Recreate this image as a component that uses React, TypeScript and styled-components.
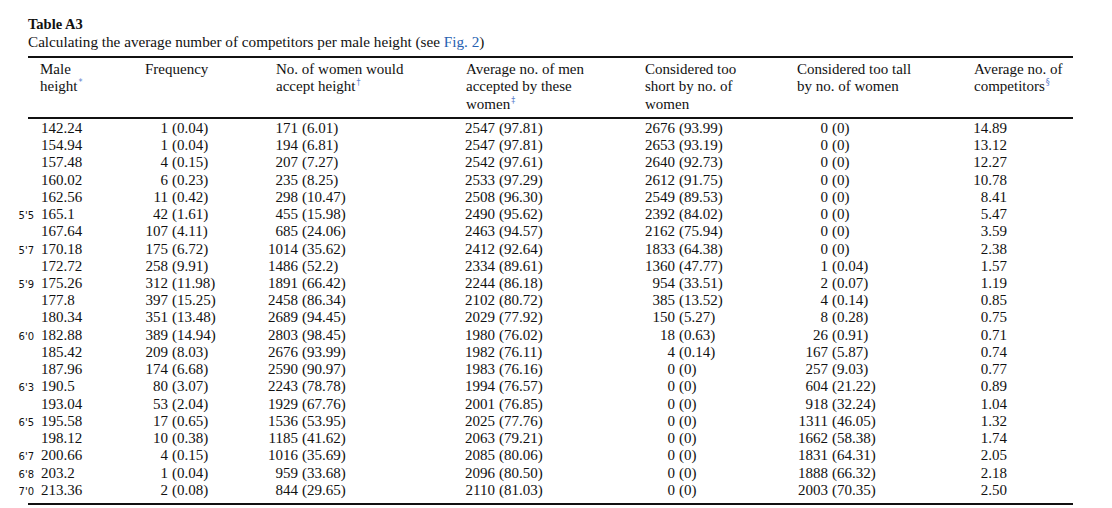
import React from "react";
import styled, { createGlobalStyle } from "styled-components";

const Global = createGlobalStyle`
  html, body { margin: 0; padding: 0; background: #ffffff; }
  body { font-family: "Liberation Serif", "Times New Roman", serif; color: #111; }
`;

const Page = styled.div`
  padding: 16px 0 0 28px;
  width: 1045px;
`;

const Title = styled.div`
  font-size: 14.5px;
  font-weight: 700;
  line-height: 17px;
`;

const Caption = styled.div`
  font-size: 15.2px;
  line-height: 18px;
  margin-bottom: 5px;
`;

const Link = styled.span`
  color: #2660b0;
`;

const Table = styled.table`
  width: 1045px;
  table-layout: fixed;
  border-collapse: collapse;
  border-top: 2px solid #111;
  border-bottom: 2px solid #111;
  font-size: 15px;
`;

const Th = styled.th`
  text-align: left;
  font-weight: 400;
  vertical-align: top;
  white-space: nowrap;
  line-height: 17.3px;
  padding: 3px 0 4px 12px;
  border-bottom: 2px solid #111;
`;

const Sup = styled.sup`
  font-family: "DejaVu Sans", sans-serif;
  font-size: 8px;
  color: #5a80cc;
  vertical-align: 6px;
  line-height: 0;
  margin-left: 1px;
`;

const Tr = styled.tr<{ $first?: boolean; $last?: boolean }>`
  td {
    padding-top: ${(p) => (p.$first ? "1px" : "0")};
    padding-bottom: ${(p) => (p.$last ? "4px" : "0")};
  }
`;

const Td = styled.td`
  padding: 0;
  vertical-align: top;
`;

const Line = styled.div<{ $w: number; $pad?: number }>`
  display: grid;
  grid-template-columns: ${(p) => p.$w}px auto;
  column-gap: 4px;
  justify-content: start;
  align-items: baseline;
  height: 17.24px;
  line-height: 17.24px;
  padding-left: ${(p) => p.$pad ?? 0}px;
  white-space: nowrap;
  overflow: visible;
`;

const Num = styled.span`
  text-align: right;
`;

const HeightLine = styled.div`
  display: flex;
  align-items: baseline;
  height: 17.24px;
  line-height: 17.24px;
  padding-left: 13px;
  white-space: nowrap;
`;

const Feet = styled.span`
  width: 24px;
  margin-left: -31px;
  margin-right: 7px;
  text-align: right;
  font-family: "DejaVu Sans", "Liberation Sans", sans-serif;
  font-size: 10px;
  color: #111;
`;

type Pair = [string, string];
type Row = {
  ft?: string;
  h: string;
  f: Pair;
  acc: Pair;
  avg: Pair;
  short: Pair;
  tall: Pair;
  comp: string;
};

const raw: string[] = [
  "|142.24|1|0.04|171|6.01|2547|97.81|2676|93.99|0|0|14.89",
  "|154.94|1|0.04|194|6.81|2547|97.81|2653|93.19|0|0|13.12",
  "|157.48|4|0.15|207|7.27|2542|97.61|2640|92.73|0|0|12.27",
  "|160.02|6|0.23|235|8.25|2533|97.29|2612|91.75|0|0|10.78",
  "|162.56|11|0.42|298|10.47|2508|96.30|2549|89.53|0|0|8.41",
  "5'5|165.1|42|1.61|455|15.98|2490|95.62|2392|84.02|0|0|5.47",
  "|167.64|107|4.11|685|24.06|2463|94.57|2162|75.94|0|0|3.59",
  "5'7|170.18|175|6.72|1014|35.62|2412|92.64|1833|64.38|0|0|2.38",
  "|172.72|258|9.91|1486|52.2|2334|89.61|1360|47.77|1|0.04|1.57",
  "5'9|175.26|312|11.98|1891|66.42|2244|86.18|954|33.51|2|0.07|1.19",
  "|177.8|397|15.25|2458|86.34|2102|80.72|385|13.52|4|0.14|0.85",
  "|180.34|351|13.48|2689|94.45|2029|77.92|150|5.27|8|0.28|0.75",
  "6'0|182.88|389|14.94|2803|98.45|1980|76.02|18|0.63|26|0.91|0.71",
  "|185.42|209|8.03|2676|93.99|1982|76.11|4|0.14|167|5.87|0.74",
  "|187.96|174|6.68|2590|90.97|1983|76.16|0|0|257|9.03|0.77",
  "6'3|190.5|80|3.07|2243|78.78|1994|76.57|0|0|604|21.22|0.89",
  "|193.04|53|2.04|1929|67.76|2001|76.85|0|0|918|32.24|1.04",
  "6'5|195.58|17|0.65|1536|53.95|2025|77.76|0|0|1311|46.05|1.32",
  "|198.12|10|0.38|1185|41.62|2063|79.21|0|0|1662|58.38|1.74",
  "6'7|200.66|4|0.15|1016|35.69|2085|80.06|0|0|1831|64.31|2.05",
  "6'8|203.2|1|0.04|959|33.68|2096|80.50|0|0|1888|66.32|2.18",
  "7'0|213.36|2|0.08|844|29.65|2110|81.03|0|0|2003|70.35|2.50",
];

const rows: Row[] = raw.map((line) => {
  const c = line.split("|");
  return {
    ft: c[0] || undefined,
    h: c[1],
    f: [c[2], c[3]],
    acc: [c[4], c[5]],
    avg: [c[6], c[7]],
    short: [c[8], c[9]],
    tall: [c[10], c[11]],
    comp: c[12],
  };
});

const widths = [105, 131, 190, 179, 152, 177, 111];
const numW = [35, 34, 41, 42, 43];

const PairCell: React.FC<{ v: Pair; w: number }> = ({ v, w }) => (
  <Td>
    <Line $w={w}>
      <Num>{v[0]}</Num>
      <span>({v[1]})</span>
    </Line>
  </Td>
);

export default function App() {
  return (
    <>
      <Global />
      <Page>
        <Title>Table A3</Title>
        <Caption>
          Calculating the average number of competitors per male height (see <Link>Fig. 2</Link>)
        </Caption>
        <Table>
          <colgroup>
            {widths.map((w, i) => (
              <col key={i} style={{ width: w }} />
            ))}
          </colgroup>
          <thead>
            <tr>
              <Th>
                Male
                <br />
                height<Sup>*</Sup>
              </Th>
              <Th>Frequency</Th>
              <Th>
                No. of women would
                <br />
                accept height<Sup>†</Sup>
              </Th>
              <Th>
                Average no. of men
                <br />
                accepted by these
                <br />
                women<Sup>‡</Sup>
              </Th>
              <Th>
                Considered too
                <br />
                short by no. of
                <br />
                women
              </Th>
              <Th>
                Considered too tall
                <br />
                by no. of women
              </Th>
              <Th>
                Average no. of
                <br />
                competitors<Sup>§</Sup>
              </Th>
            </tr>
          </thead>
          <tbody>
            {rows.map((r, i) => (
              <Tr key={i} $first={i === 0} $last={i === rows.length - 1}>
                <Td>
                  <HeightLine>
                    {r.ft && <Feet>{r.ft}</Feet>}
                    <span>{r.h}</span>
                  </HeightLine>
                </Td>
                <PairCell v={r.f} w={numW[0]} />
                <PairCell v={r.acc} w={numW[1]} />
                <PairCell v={r.avg} w={numW[2]} />
                <PairCell v={r.short} w={numW[3]} />
                <PairCell v={r.tall} w={numW[4]} />
                <Td>
                  <Line $w={45}>
                    <Num>{r.comp}</Num>
                  </Line>
                </Td>
              </Tr>
            ))}
          </tbody>
        </Table>
      </Page>
    </>
  );
}
